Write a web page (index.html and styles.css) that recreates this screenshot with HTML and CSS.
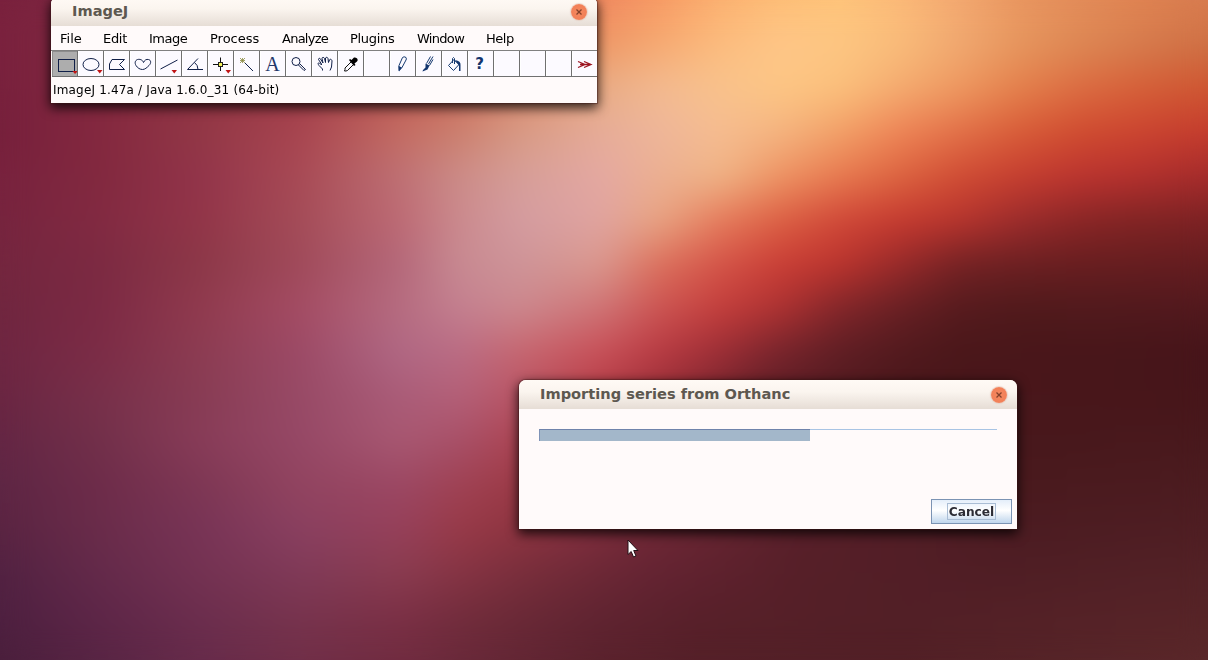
FILE: index.html
```html
<!DOCTYPE html>
<html lang="en">
<head>
    <meta charset="UTF-8">
    <meta name="viewport" content="width=device-width, initial-scale=1.0">
    <title>ImageJ</title>
    <link rel="stylesheet" href="styles.css">
</head>
<body>
    <div class="wallpaper">
        <div class="band b0"></div>
        <div class="band b1"></div>
        <div class="band b2"></div>
        <div class="band b3"></div>
        <div class="band b4"></div>
        <div class="band b5"></div>
        <div class="band b6"></div>
        <div class="band b7"></div>
        <div class="band b8"></div>
        <div class="band b9"></div>
        <div class="band b10"></div>
        <div class="band b11"></div>
        <div class="band b12"></div>
        <div class="band b13"></div>
        <div class="band b14"></div>
        <div class="band b15"></div>
    </div>

    <div class="window main-window">
        <div class="titlebar">
            <span class="title">ImageJ</span>
            <span class="close"><svg width="8" height="8" viewBox="0 0 8 8"><path d="M1.5 1.5l5 5M6.5 1.5l-5 5"/></svg></span>
        </div>
        <div class="menubar">
            <span class="menu-file">File</span>
            <span class="menu-edit">Edit</span>
            <span class="menu-image">Image</span>
            <span class="menu-process">Process</span>
            <span class="menu-analyze">Analyze</span>
            <span class="menu-plugins">Plugins</span>
            <span class="menu-window">Window</span>
            <span class="menu-help">Help</span>
        </div>
        <div class="toolbar">
            <!-- selection tools -->
            <div class="tool active"><svg viewBox="0 0 25 25"><rect x="6.5" y="8.5" width="16" height="12"/><path class="arrow" d="M20.500 20h4.500v1l-2 2z"/></svg></div>
            <div class="tool"><svg viewBox="0 0 25 25"><ellipse cx="13" cy="13.5" rx="8" ry="6"/><path class="arrow" d="M19 19h5.500l-2.750 3.500z"/></svg></div>
            <div class="tool"><svg viewBox="0 0 25 25"><path d="M8 8.500H20.500L15.500 13.500L20.500 18.500H5.500V13z"/></svg></div>
            <div class="tool"><svg viewBox="0 0 25 25"><path d="M13.500 11.500C12.500 8.500 9.500 8 7.500 8.500C5 9.500 4.500 12 6 14.500C7.500 17 10 18.500 12.500 18.500C15 18.500 17 16.500 19 14.500C21.500 12 21 9 18.500 8.500C16.500 8 14.500 9 13.500 11.500z"/></svg></div>
            <div class="tool"><svg viewBox="0 0 25 25"><path d="M4.500 18L21.500 9"/><path class="arrow" d="M15.500 19h5.500l-2.750 3.500z"/></svg></div>
            <div class="tool"><svg viewBox="0 0 25 25"><path d="M21 18.500H5.500L16 7.500M12.500 11.500Q16 14 16 18.500"/></svg></div>
            <div class="tool"><svg viewBox="0 0 25 25"><path class="black" d="M5 13.500H20M12.500 6.500V20"/><rect class="point" x="10.500" y="11.500" width="4" height="4"/><path class="arrow" d="M17.500 19h5.500l-2.750 3.500z"/></svg></div>
            <div class="tool"><svg viewBox="0 0 25 25"><path class="spark" d="M6 7l5 5M11 7l-5 5M8.500 7v5M6 9.500h5"/><path d="M11 12L19 20"/></svg></div>
            <div class="tool"><span class="tool-text">A</span></div>
            <div class="tool"><svg viewBox="0 0 25 25"><circle cx="10" cy="10.500" r="4"/><path d="M12.500 14L18 19.500M13.500 12.500L19.500 18.500M18 19.500L19.500 18.500"/></svg></div>
            <div class="tool"><svg viewBox="0 0 25 25"><path d="M10.500 19.500V18L7 14.500C5.500 12.500 6 11.500 7.500 12L9.500 14V13L6.500 8.500C6.500 7 8 7 8.500 8L11 12L10 7.500C10 6 12 6 12.500 7.500L13.500 11.500V7C14 6 15.500 6 16 7.500L16.500 11.500L17.500 9C18 7.500 20 8.500 20 10L19.500 16L18 19.500"/></svg></div>
            <div class="tool"><svg viewBox="0 0 25 25"><path class="black" d="M13 11L7 17V18.500L6.500 20H8L9.500 19.500L15.500 13.500"/><path class="bulb" d="M11 9l1-1 1.500 1 2.500-2.500q2.500-.5 3.500 1.500 .500 1.500-.5 2.500L16.500 12.500l1 1.500-1.500 1z"/></svg></div>
            <div class="tool"></div>
            <!-- drawing tools -->
            <div class="tool"><svg viewBox="0 0 25 25"><path class="blue" d="M9 14.500L12.500 6.500Q14 5 16 6.500Q16.800 8 16 9L12 16.500L9 19.500z"/><path class="fill" d="M8.500 15l3.500 1.500-3 4z"/></svg></div>
            <div class="tool"><svg viewBox="0 0 25 25"><path class="blue" d="M17 5.500L12.500 13M14.500 5.500L10.500 12.500M17 8.500L13.500 14.500"/><path class="fill" d="M9.500 12.500L13.500 14.500L11.500 18.500L6.500 20.500L7 19L9.500 16.500z"/></svg></div>
            <div class="tool"><svg viewBox="0 0 25 25"><path class="blue" d="M11.500 9L6.500 14.500L11.500 19.500L17 13.500L11.500 8.500M10.500 12V7.500Q11.500 5.500 12.500 7.500V13"/><path class="fill" d="M13 9Q19 10 18.500 14V20H17V14.500z"/></svg></div>
            <div class="tool"><span class="tool-help">?</span></div>
            <div class="tool"></div>
            <div class="tool"></div>
            <div class="tool"></div>
            <div class="tool"><svg viewBox="0 0 25 25"><path class="more" d="M6 10.500L13 13.500L6 16.500M12 10.500L19 13.500L12 16.500M8 13.500H19"/></svg></div>
        </div>
        <div class="status">ImageJ 1.47a / Java 1.6.0_31 (64-bit)</div>
    </div>

    <div class="window dialog">
        <div class="titlebar">
            <span class="title">Importing series from Orthanc</span>
            <span class="close"><svg width="8" height="8" viewBox="0 0 8 8"><path d="M1.5 1.5l5 5M6.5 1.5l-5 5"/></svg></span>
        </div>
        <div class="dialog-body">
            <div class="progress">
                <div class="progress-bar" style="width: 271px"></div>
            </div>
            <button class="cancel"><span>Cancel</span></button>
        </div>
    </div>

    <svg class="cursor" width="12" height="20" viewBox="0 0 12 20"><path d="M1 1V15.500L4.200 12.500L6.500 18L9 17L6.700 11.500H11z"/></svg>
</body>
</html>
```
FILE: styles.css
```css
* {
    margin: 0;
    padding: 0;
    box-sizing: border-box;
}

body {
    position: relative;
    width: 1208px;
    height: 660px;
    overflow: hidden;
    font-family: 'DejaVu Sans', sans-serif;
    background: #6a2436;
}

/* Wallpaper: horizontal gradients, each one fading into the next */
.wallpaper {
    display: grid;
    width: 1208px;
    height: 660px;
}

.wallpaper::after {
    content: '';
    grid-area: 1 / 1;
    backdrop-filter: blur(14px);
}

.band {
    grid-area: 1 / 1;
    -webkit-mask-image: linear-gradient(transparent, #000 44px);
    mask-image: linear-gradient(transparent, #000 44px);
}

.b0 {
    -webkit-mask-image: none;
    mask-image: none;
    background: linear-gradient(90deg, #7a213d 0, #7c2540 50px, #a03d4a 300px, #d0685a 500px, #f08860 600px, #f79a64 660px, #fbb070 720px, #fdbd76 780px, #fec47a 840px, #fbb978 900px, #f3a870 960px, #e99660 1020px, #e38c5a 1080px, #e08452 1140px, #d87c50 1208px);
}

.b1 {
    background: linear-gradient(90deg, #7a223e 0, #802740 80px, #a03d4a 300px, #cc7260 500px, #ee9866 600px, #f6aa72 660px, #fcbc7e 720px, #fec688 780px, #fdc682 840px, #f9bc7a 900px, #f0a870 960px, #e6965e 1020px, #dd8854 1080px, #d67c4e 1140px, #ce7044 1208px);
}

.b2 {
    margin-top: 44px;
    background: linear-gradient(90deg, #78213d 0, #83283f 100px, #a03d48 300px, #c8665a 440px, #d88a6e 520px, #e8ac86 600px, #f3ba90 660px, #f8c28c 720px, #fdc684 780px, #fbc07c 840px, #f4ab70 900px, #ee9860 960px, #e4804c 1020px, #dc6c42 1080px, #d66038 1140px, #ce5632 1208px);
}

.b3 {
    margin-top: 88px;
    background: linear-gradient(90deg, #76203c 0, #84283f 100px, #923846 200px, #a84550 300px, #c46c62 400px, #cc806e 460px, #d89a84 520px, #e6ac98 600px, #eeb69a 660px, #f6bc90 720px, #f4b480 780px, #f2a068 840px, #ee8456 900px, #e27048 960px, #d85c38 1020px, #d04c30 1080px, #cc4430 1140px, #c43c2e 1208px);
}

.b4 {
    margin-top: 132px;
    background: linear-gradient(90deg, #78223e 0, #82293f 100px, #92344a 200px, #a84a55 300px, #be7074 400px, #cc8c88 460px, #d69e98 520px, #e4a8a2 600px, #ecb092 660px, #efb486 720px, #ee9464 780px, #e87a50 840px, #dc6440 900px, #d04c34 960px, #c63e30 1020px, #bc3430 1080px, #b4302e 1140px, #a42c2c 1208px);
}

.b5 {
    margin-top: 176px;
    background: linear-gradient(90deg, #76243e 0, #822a42 100px, #923548 200px, #a44c58 300px, #bd6a74 400px, #cb8a8e 460px, #d49ca0 520px, #e0a4a0 600px, #e8a482 660px, #e67c5c 720px, #dc6044 780px, #d04838 840px, #c63a30 900px, #b8342e 960px, #9c2c2c 1020px, #8a2626 1080px, #802424 1140px, #7c2224 1208px);
}

.b6 {
    margin-top: 220px;
    background: linear-gradient(90deg, #74263f 0, #7c2a42 100px, #8c3848 200px, #a04a5a 300px, #b4687a 400px, #c88a92 460px, #ce9498 520px, #da988e 600px, #dc705c 660px, #d45448 720px, #ca3e36 780px, #bc342e 840px, #982a2a 900px, #742224 960px, #6c2022 1020px, #681e20 1080px, #641d20 1208px);
}

.b7 {
    margin-top: 264px;
    background: linear-gradient(90deg, #70263f 0, #7c2a44 100px, #903a4e 200px, #a44c64 300px, #b66c80 400px, #c48090 460px, #cc888e 520px, #cf7476 600px, #cc5452 660px, #c43e3c 720px, #ae3232 780px, #82262a 840px, #682024 900px, #561b1e 960px, #501a1c 1020px, #52191e 1208px);
}

.b8 {
    margin-top: 308px;
    background: linear-gradient(90deg, #6e2642 0, #7c2c46 100px, #8c3c52 200px, #9c4a66 300px, #b06884 400px, #ba6c84 460px, #c66670 520px, #c85058 600px, #b83a42 660px, #9c2e36 720px, #76242c 780px, #5e1e24 840px, #521a1e 900px, #4a171a 960px, #46151a 1208px);
}

.b9 {
    margin-top: 352px;
    background: linear-gradient(90deg, #6a2642 0, #78304a 100px, #883c54 200px, #984a66 300px, #aa5c78 400px, #b46078 460px, #b85464 520px, #b43c46 600px, #8e2c35 680px, #621f27 760px, #4a171b 900px, #47161a 1208px);
}

.b10 {
    margin-top: 396px;
    background: linear-gradient(90deg, #642644 0, #72304a 100px, #883c58 200px, #964866 300px, #a85872 400px, #a85068 460px, #ac4452 520px, #92323e 600px, #5e2026 700px, #48181c 1020px, #49191d 1208px);
}

.b11 {
    margin-top: 440px;
    background: linear-gradient(90deg, #5e2644 0, #6e2c4a 100px, #7e3754 200px, #924460 300px, #9c4864 400px, #a04254 460px, #9c3a46 520px, #8a323c 580px, #6a2630 700px, #4a1a1e 1020px, #4c1c20 1208px);
}

.b12 {
    margin-top: 484px;
    background: linear-gradient(90deg, #5a2442 0, #6a2c4a 100px, #783456 200px, #8a4060 300px, #96405a 400px, #983a48 460px, #8e3440 520px, #843040 570px, #702836 650px, #58202a 800px, #4c1c22 1020px, #4f1e23 1208px);
}

.b13 {
    margin-top: 528px;
    background: linear-gradient(90deg, #522242 0, #642a4a 100px, #743252 200px, #803a58 300px, #8a3c50 400px, #863444 460px, #762d3a 540px, #652433 650px, #561f28 800px, #4f1e25 1000px, #532226 1208px);
}

.b14 {
    margin-top: 572px;
    background: linear-gradient(90deg, #4e2040 0, #5e2648 100px, #6c2e4e 200px, #78344e 300px, #7c3046 400px, #702c3a 480px, #602431 600px, #58202a 700px, #521f26 900px, #572427 1208px);
}

.b15 {
    margin-top: 616px;
    background: linear-gradient(90deg, #4a1f3c 0, #582544 100px, #662b4a 200px, #702f48 300px, #702c40 400px, #642736 500px, #5a222d 600px, #542028 700px, #522026 900px, #5a282a 1208px);
}

/* Windows */
.window {
    position: absolute;
    display: flex;
    flex-direction: column;
    overflow: hidden;
    background: #fffafa;
    border-radius: 7px 7px 0 0;
    box-shadow: 0 0 1px 1px rgba(60, 20, 20, 0.45), 0 4px 12px 1px rgba(0, 0, 0, 0.8);
}

.main-window {
    left: 51px;
    top: -3px;
    width: 546px;
    height: 106px;
}

.dialog {
    left: 519px;
    top: 380px;
    width: 498px;
    height: 149px;
}

.titlebar {
    display: flex;
    justify-content: space-between;
    align-items: center;
    flex: none;
    height: 29px;
    padding: 1px 10px 0 21px;
    background: linear-gradient(#fffaf5, #fbf5ef 40%, #e6ddd5);
}

.title {
    margin-top: -3px;
    color: #5d5850;
    font-size: 14.6px;
    font-weight: bold;
    line-height: 18px;
    white-space: nowrap;
}

.close {
    display: flex;
    align-items: center;
    justify-content: center;
    width: 16px;
    height: 16px;
    border-radius: 50%;
    background: radial-gradient(#f58a60, #f28058 60%, #f09a7a);
    box-shadow: 0 0 1px 1px rgba(225, 195, 180, 0.6);
}

.close path {
    fill: none;
    stroke: #84402a;
    stroke-width: 1.3;
}

.menubar {
    display: flex;
    flex: none;
    height: 25px;
    padding-left: 9px;
    border-bottom: 1px solid #808080;
    color: #000;
    font-size: 13px;
    line-height: 26px;
    white-space: nowrap;
}

.menubar span {
    flex: none;
}

.menu-file {
    width: 43px;
}

.menu-edit {
    width: 46px;
    letter-spacing: -0.3px;
}

.menu-image {
    width: 61px;
    letter-spacing: -0.5px;
}

.menu-process {
    width: 72px;
}

.menu-analyze {
    width: 68px;
    letter-spacing: -0.75px;
}

.menu-plugins {
    width: 67px;
    letter-spacing: -0.3px;
}

.menu-window {
    width: 69px;
    letter-spacing: -0.7px;
}

.menu-help {
    letter-spacing: -0.5px;
}

.toolbar {
    display: flex;
    flex: none;
    height: 26px;
    padding-left: 1px;
}

.tool {
    display: flex;
    flex: none;
    align-items: center;
    justify-content: center;
    width: 26px;
    height: 26px;
    border-right: 1px solid #707070;
    border-bottom: 1px solid #707070;
    background: #fcfaff;
    box-shadow: inset 1px 0 #fff;
}

.tool:last-child {
    border-right: none;
    padding-right: 1px;
}

.tool.active {
    background: #adadad;
    box-shadow: inset 1px 1px #8c8c8c;
}

.tool svg {
    width: 25px;
    height: 25px;
    fill: none;
    stroke: #101f48;
    stroke-width: 1;
}

.tool .arrow {
    fill: #c01414;
    stroke: none;
}

.tool .black {
    stroke: #101010;
}

.tool .point {
    fill: #f4f25a;
    stroke: #222;
}

.tool .spark {
    stroke: #8a8a40;
    stroke-width: 0.8;
}

.tool .bulb {
    fill: #000;
    stroke: none;
}

.tool .blue {
    stroke: #163a70;
}

.tool .fill {
    fill: #12356e;
    stroke: none;
}

.tool .more {
    stroke: #9c1420;
    stroke-width: 1.3;
}

.tool-text {
    padding-top: 2px;
    color: #24386a;
    font-family: 'Liberation Serif', serif;
    font-size: 20px;
    line-height: 23px;
}

.tool-help {
    padding-top: 2px;
    margin-right: 2px;
    color: #12356e;
    font-size: 15px;
    font-weight: bold;
    line-height: 23px;
}

.status {
    padding-left: 2px;
    color: #000;
    font-size: 12px;
    letter-spacing: 0.17px;
    line-height: 27px;
    white-space: nowrap;
}

/* Import dialog */
.dialog-body {
    display: flex;
    flex: 1;
    flex-direction: column;
    justify-content: space-between;
    align-items: flex-end;
    padding: 20px 5px 5px 20px;
}

.progress {
    width: 458px;
    margin-right: 15px;
    border-top: 1px solid #a8c4e4;
}

.progress-bar {
    height: 12px;
    margin-top: -1px;
    background: #a3b7ca;
    border-top: 1px solid #6f83ab;
    border-left: 1px solid #7f93b7;
}

.cancel {
    display: flex;
    align-items: center;
    justify-content: center;
    width: 81px;
    height: 25px;
    border: 1px solid #7b93b3;
    background: linear-gradient(#e4eefa, #fff 45%, #c0d6ec);
    color: #2c2c34;
    font-family: 'DejaVu Sans', sans-serif;
    font-size: 12.2px;
    font-weight: bold;
}

.cancel span {
    width: 49px;
    height: 17px;
    border: 1px solid #a9bdd4;
    line-height: 16px;
}

.cursor {
    position: absolute;
    left: 627px;
    top: 539px;
    fill: #fff;
    stroke: #241016;
    stroke-width: 1;
}
```
